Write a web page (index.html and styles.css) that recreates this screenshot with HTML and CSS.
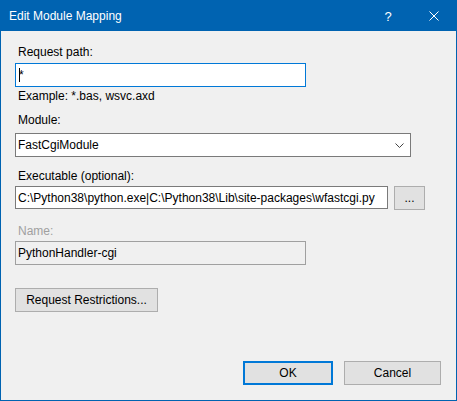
FILE: index.html
```html
<!DOCTYPE html>
<html>
<head>
<meta charset="utf-8">
<link rel="stylesheet" href="styles.css">
</head>
<body>
<div class="window">
  <div class="titlebar">
    <span class="title">Edit Module Mapping</span>
    <span class="tb-btn help">?</span>
    <span class="tb-btn close">
      <svg width="10" height="10" viewBox="0 0 10 10"><path d="M0.5 0.5 L9.5 9.5 M9.5 0.5 L0.5 9.5" stroke="#fff" stroke-width="1" fill="none"/></svg>
    </span>
  </div>
  <div class="content">
    <div class="lbl lbl-first">Request path:</div>
    <div class="field field-path focused"><span class="caret"></span>*</div>
    <div class="lbl hint">Example: *.bas, wsvc.axd</div>
    <div class="lbl lbl-module">Module:</div>
    <div class="field select">
      <span class="select-text">FastCgiModule</span>
      <svg class="chev" width="9" height="5" viewBox="0 0 9 5"><path d="M0.5 0.5 L4.5 4.5 L8.5 0.5" stroke="#444" stroke-width="1" fill="none"/></svg>
    </div>
    <div class="lbl lbl-exec">Executable (optional):</div>
    <div class="exec-row">
      <div class="field field-exec">C:\Python38\python.exe|C:\Python38\Lib\site-packages\wfastcgi.py</div>
      <div class="btn browse">...</div>
    </div>
    <div class="lbl lbl-name disabled">Name:</div>
    <div class="field field-name readonly">PythonHandler-cgi</div>
    <div class="btn restrictions">Request Restrictions...</div>
    <div class="footer">
      <div class="btn ok">OK</div>
      <div class="btn cancel">Cancel</div>
    </div>
  </div>
</div>
</body>
</html>
```

FILE: styles.css
```css
html, body {
  margin: 0;
  padding: 0;
  background: #f0f0f0;
}
.window {
  width: 457px;
  height: 401px;
  box-sizing: border-box;
  border: 1px solid #0063b1;
  border-top: 0;
  background: #f0f0f0;
  display: flex;
  flex-direction: column;
  font-family: "Liberation Sans", Arial, sans-serif;
  font-size: 12px;
  color: #000;
}
.titlebar {
  height: 31px;
  flex: none;
  background: #0063b1;
  display: flex;
  align-items: center;
  color: #fff;
  margin: 0 -1px;
  padding-left: 9px;
}
.title {
  flex: 1;
  font-size: 12px;
  padding-top: 1px;
}
.tb-btn {
  width: 46px;
  height: 31px;
  display: flex;
  align-items: center;
  justify-content: center;
}
.help {
  font-size: 13px;
  padding-top: 1px;
}
.close svg {
  display: block;
  margin-top: 1px;
}
.content {
  flex: 1;
  display: flex;
  flex-direction: column;
  align-items: flex-start;
  padding: 14px 15px 15px 14px;
}
.lbl {
  line-height: 15px;
  height: 15px;
  padding-left: 3px;
}
.hint { margin-top: 2px; }
.lbl-module { margin-top: 9px; }
.lbl-exec { margin-top: 12px; }
.lbl-name { margin-top: 14px; }
.disabled { color: #a0a0a0; }
.field {
  box-sizing: border-box;
  height: 24px;
  border: 1px solid #7a7a7a;
  background: #fff;
  padding-left: 2px;
  display: flex;
  align-items: center;
  white-space: nowrap;
  overflow: hidden;
}
.field-path {
  width: 291px;
  margin-top: 3px;
}
.focused { border-color: #0078d7; }
.caret {
  display: inline-block;
  width: 1px;
  height: 14px;
  background: #000;
  margin-right: -1px;
  margin-left: 1px;
}
.select {
  width: 396px;
  margin-top: 5px;
  justify-content: space-between;
  padding-right: 6px;
}
.chev { display: block; }
.exec-row {
  display: flex;
  gap: 6px;
  margin-top: 2px;
  align-items: flex-start;
}
.field-exec {
  width: 373px;
  height: 23px;
}
.field-name {
  width: 291px;
  margin-top: 2px;
}
.readonly {
  background: #f0f0f0;
  border-color: #a0a0a0;
}
.btn {
  box-sizing: border-box;
  height: 24px;
  background: #e1e1e1;
  border: 1px solid #adadad;
  display: flex;
  align-items: center;
  justify-content: center;
  white-space: nowrap;
}
.browse { width: 31px; }
.restrictions {
  width: 143px;
  margin-top: 23px;
}
.footer {
  margin-top: auto;
  align-self: stretch;
  display: flex;
  justify-content: flex-end;
  gap: 11px;
}
.ok {
  width: 90px;
  border: 2px solid #0078d7;
}
.cancel { width: 97px; }
```
